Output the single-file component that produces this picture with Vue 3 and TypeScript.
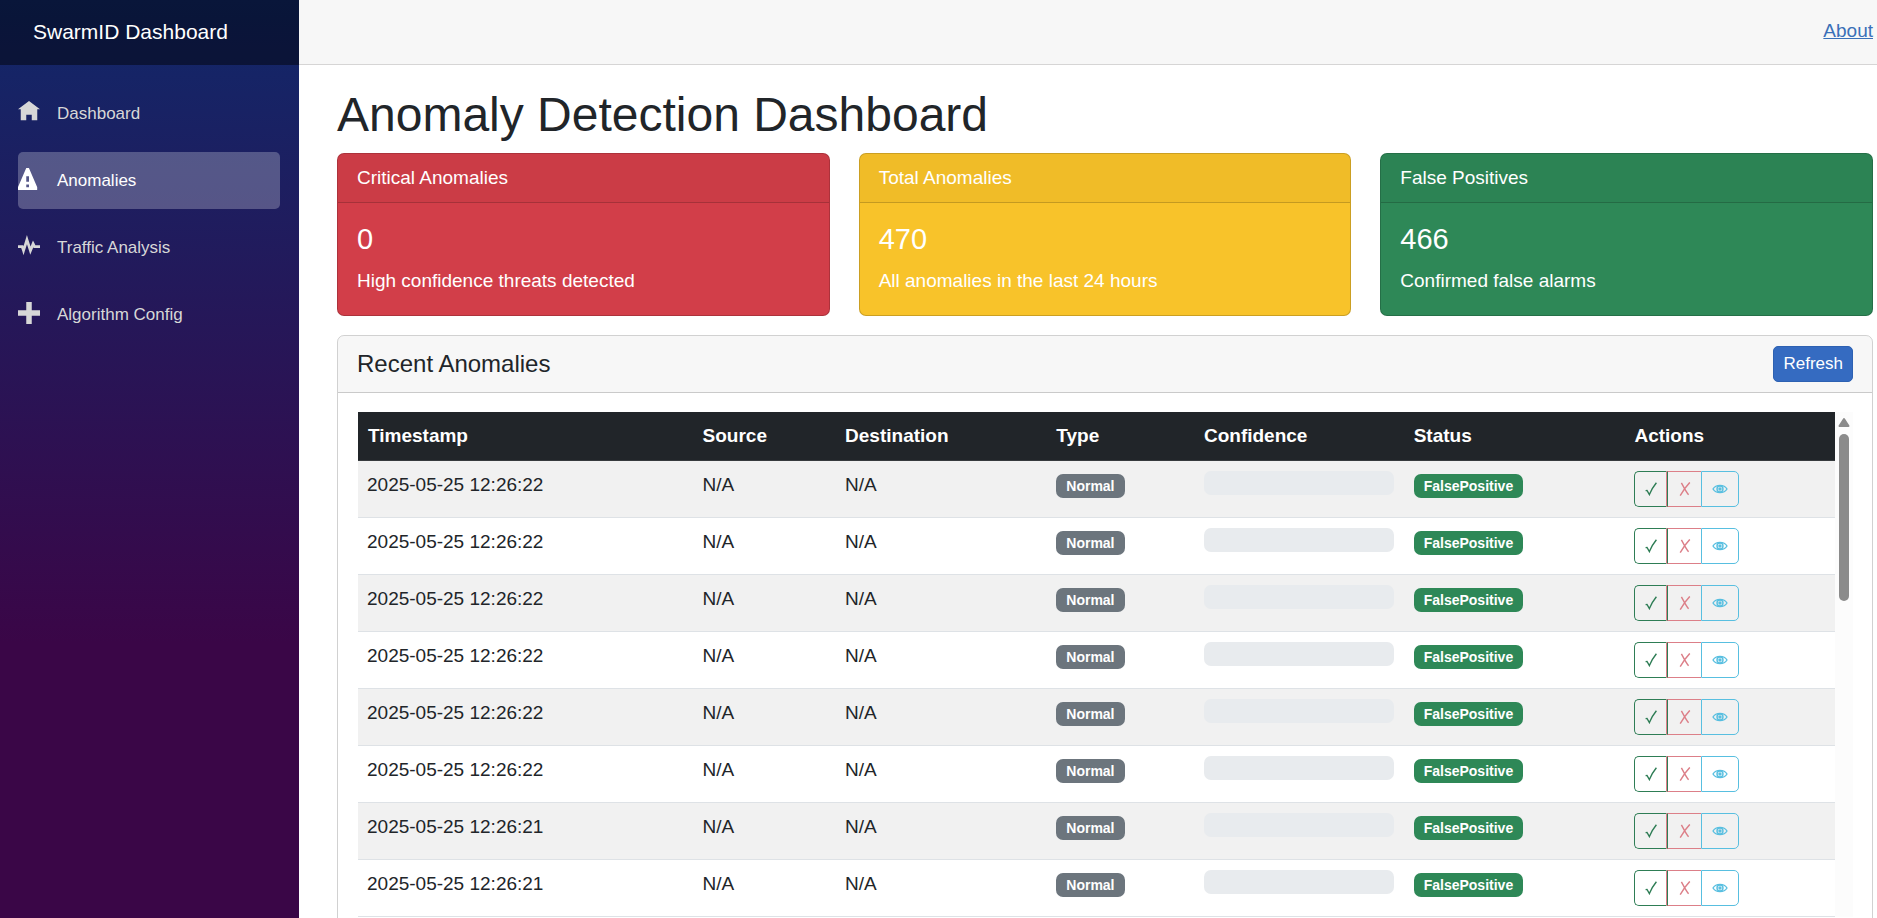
<script setup lang="ts">
interface NavItem { label: string; icon: string; active?: boolean }
interface Summary { title: string; value: number; note: string; tone: string }
interface Anomaly { id: number; time: string; source: string; destination: string; type: string; confidence: number; status: string }

const navItems: NavItem[] = [
  { label: 'Dashboard', icon: 'M4 0l-4 3h1v4h2v-2h2v2h2v-4.03l1 .03-4-3z' },
  { label: 'Anomalies', active: true, icon: 'M3.09 0c-.06 0-.1.04-.13.09l-2.94 6.81c-.02.05-.03.13-.03.19v.81c0 .05.04.09.09.09h6.81c.05 0 .09-.04.09-.09v-.81c0-.05-.01-.14-.03-.19l-2.94-6.81c-.02-.05-.07-.09-.13-.09h-.81zm-.09 3h1v2h-1v-2zm0 3h1v1h-1v-1z' },
  { label: 'Traffic Analysis', icon: 'M3.25 0l-.47 1.53-.78 2.56-.03-.06-.09-.34h-1.88v1h1.16l.38 1.16.47 1.47.47-1.5.78-2.5.78 2.5.41 1.34.53-1.28.59-1.47.13.28h2.31v-1h-1.69l-.38-.75-.5-.97-.41 1.03-.47 1.19-.84-2.66-.47-1.53z' },
  { label: 'Algorithm Config', icon: 'M3 0v3h-3v2h3v3h2v-3h3v-2h-3v-3h-2z' },
]

const summaries: Summary[] = [
  { title: 'Critical Anomalies', value: 0, note: 'High confidence threats detected', tone: 'danger' },
  { title: 'Total Anomalies', value: 470, note: 'All anomalies in the last 24 hours', tone: 'warning' },
  { title: 'False Positives', value: 466, note: 'Confirmed false alarms', tone: 'success' },
]

const columns = ['Timestamp', 'Source', 'Destination', 'Type', 'Confidence', 'Status', 'Actions']

const anomalies: Anomaly[] = Array.from({ length: 8 }, (_, i) => ({
  id: i + 1,
  time: i < 6 ? '2025-05-25 12:26:22' : '2025-05-25 12:26:21',
  source: 'N/A',
  destination: 'N/A',
  type: 'Normal',
  confidence: 0,
  status: 'FalsePositive',
}))
</script>

<template>
  <div class="page">
    <aside class="sidebar">
      <div class="brand-row"><a class="brand" href="#">SwarmID Dashboard</a></div>
      <nav class="nav">
        <a v-for="item in navItems" :key="item.label" href="#" class="nav-link" :class="{ active: item.active }">
          <span class="nav-icon"><svg viewBox="0 0 8 8" aria-hidden="true"><path :d="item.icon" /></svg></span>
          <span>{{ item.label }}</span>
        </a>
      </nav>
    </aside>

    <main class="main">
      <header class="top-row"><a href="#">About</a></header>
      <article class="content">
        <h1>Anomaly Detection Dashboard</h1>

        <section class="summaries">
          <div v-for="card in summaries" :key="card.title" class="card" :class="card.tone">
            <div class="card-header">{{ card.title }}</div>
            <div class="card-body">
              <h4>{{ card.value }}</h4>
              <p>{{ card.note }}</p>
            </div>
          </div>
        </section>

        <section class="card recent">
          <div class="card-header recent-header">
            <h5>Recent Anomalies</h5>
            <button type="button" class="refresh">Refresh</button>
          </div>
          <div class="card-body table-area">
            <table>
              <colgroup>
                <col v-for="name in columns" :key="name" :class="'col-' + name.toLowerCase()" />
              </colgroup>
              <thead>
                <tr><th v-for="name in columns" :key="name" scope="col">{{ name }}</th></tr>
              </thead>
              <tbody>
                <tr v-for="row in anomalies" :key="row.id">
                  <td>{{ row.time }}</td>
                  <td>{{ row.source }}</td>
                  <td>{{ row.destination }}</td>
                  <td><span class="badge">{{ row.type }}</span></td>
                  <td>
                    <div class="progress" role="progressbar" aria-label="Confidence" :aria-valuenow="row.confidence">
                      <div class="progress-bar" :style="{ width: row.confidence + '%' }"></div>
                    </div>
                  </td>
                  <td><span class="badge confirmed">{{ row.status }}</span></td>
                  <td>
                    <div class="actions">
                      <button type="button" class="action confirm" aria-label="Confirm">
                        <svg viewBox="0 0 12 14" aria-hidden="true"><path d="M.6 8.6 2 8.4 4.4 12.6C6.2 8.2 8.4 4.4 11.4.8" /></svg>
                      </button>
                      <button type="button" class="action reject" aria-label="Mark as false positive">
                        <svg viewBox="0 0 12 14" aria-hidden="true"><path d="M2.4.8C4 3.8 7 9.8 9.6 12.8M10.8.4C7.4 4 4 8.6 1.2 13.6" /></svg>
                      </button>
                      <button type="button" class="action view" aria-label="View details">
                        <svg viewBox="0 0 16 10" aria-hidden="true">
                          <path d="M1 5C4 .2 12 .2 15 5C12 9.8 4 9.8 1 5Z" />
                          <circle cx="8" cy="5" r="3" /><circle class="pupil" cx="8" cy="5" r="1" />
                        </svg>
                      </button>
                    </div>
                  </td>
                </tr>
              </tbody>
            </table>
            <div class="scrollbar" aria-hidden="true">
              <svg viewBox="0 0 12 10"><path d="M6 1.5 10.5 8.5H1.5Z" /></svg>
              <div class="thumb"></div>
            </div>
          </div>
        </section>
      </article>
    </main>
  </div>
</template>

<style>
body { margin: 0; }
</style>

<style scoped>
* { box-sizing: border-box; }
.page { display: flex; height: 100vh; overflow: hidden; background: #fff; color: #212529; font: 19px/29px "Liberation Sans", Arial, sans-serif; }
h1, h4, h5, p { margin: 0; font-weight: 400; }

.sidebar { flex: 0 0 299px; background: linear-gradient(180deg, #11286a 0%, #3a0647 70%); }
.brand-row { display: flex; align-items: center; height: 65px; padding: 0 0 2px 33px; background: rgba(0, 0, 0, .45); }
.brand { color: #fff; font-size: 21px; text-decoration: none; }
.nav { display: flex; flex-direction: column; gap: 10px; padding: 20px 19px 0 18px; }
.nav-link { display: flex; align-items: center; height: 57px; border-radius: 5px; color: #d7d7d7; font-size: 17px; text-decoration: none; }
.nav-link.active { background: rgba(255, 255, 255, .25); color: #fff; }
.nav-icon { display: flex; width: 39px; padding-bottom: 3px; }
.nav-icon svg { width: 22px; height: 22px; fill: currentColor; }

.main { flex: 1; min-width: 0; }
.top-row { display: flex; align-items: center; justify-content: flex-end; height: 65px; padding: 0 4px 4px 38px; background: #f7f7f7; border-bottom: 1px solid #d6d5d5; }
.top-row a { color: #3a70b8; }
.content { padding: 21px 4px 0 38px; }
h1 { margin-bottom: 9px; font-size: 48px; line-height: 58px; }

.summaries { display: grid; grid-template-columns: repeat(3, 1fr); gap: 29px; margin-bottom: 19px; color: #fff; }
.card { border: 1px solid rgba(0, 0, 0, .18); border-radius: 7px; overflow: hidden; }
.card-header { padding: 9px 19px 10px; background: rgba(0, 0, 0, .03); border-bottom: 1px solid rgba(0, 0, 0, .18); }
.card-body { padding: 19px 19px 20px; }
.danger { background-color: #d23e49; }
.warning { background-color: #f8c32a; }
.success { background-color: #2e8857; }
h4 { margin-bottom: 9px; font-size: 29px; line-height: 35px; }
h5 { font-size: 24px; line-height: 36px; }

.recent-header { display: flex; align-items: center; justify-content: space-between; padding: 10px 19px; }
.refresh { height: 36px; padding: 0 9px; border: 1px solid #2d61b2; border-radius: 5px; background: #356bc1; color: #fff; font: 17px/24px "Liberation Sans", Arial, sans-serif; }

.table-area { display: flex; align-items: stretch; padding-left: 20px; }
table { flex: 1; min-width: 0; width: 100%; table-layout: fixed; border-collapse: separate; border-spacing: 0; }
.col-timestamp { width: 22.65%; }
.col-source { width: 9.65%; }
.col-destination { width: 14.3%; }
.col-type { width: 10%; }
.col-confidence { width: 14.2%; }
.col-status { width: 14.95%; }
.col-actions { width: 14.25%; }
th { padding: 9px 10px 10px; background: #212529; border-bottom: 1px solid #373b3e; color: #fff; text-align: left; }
td { height: 57px; padding: 10px; border-bottom: 1px solid #dee2e6; vertical-align: top; line-height: 28px; }
td:first-child { padding-left: 9px; }
tbody tr:nth-child(odd) { background: #f1f1f1; }
.badge { display: inline-block; padding: 5px 10px; border-radius: 7px; background: #6c757d; color: #fff; font-size: 14px; font-weight: 700; line-height: 14px; }
.badge.confirmed { background: #2e8857; }
.progress { height: 24px; border-radius: 7px; background: #e8ebee; overflow: hidden; }
.progress-bar { height: 100%; background: #356bc1; }
.actions { display: flex; }
.action { display: flex; align-items: center; justify-content: center; width: 34px; height: 36px; padding: 0; border: 1px solid currentColor; background: transparent; }
.action svg { width: 12px; height: 14px; fill: none; stroke: currentColor; stroke-width: 1.4; }
.confirm { width: 33px; border-right-color: #dc7f88; border-radius: 5px 0 0 5px; color: #2e7d55; }
.reject { border-left-color: #2e7d55; border-right: 0; color: #dc7f88; }
.view { width: 38px; border-radius: 0 5px 5px 0; color: #58bfe0; }
.action.view svg { width: 16px; height: 10px; }
.action .pupil { fill: currentColor; }

.scrollbar { display: flex; flex: 0 0 18px; flex-direction: column; align-items: center; gap: 6px; padding-top: 5px; background: #fcfcfc; }
.scrollbar svg { width: 12px; height: 11px; fill: #8b8b8b; stroke: #8b8b8b; stroke-width: 2; stroke-linejoin: round; }
.thumb { width: 10px; height: 167px; border-radius: 5px; background: #8b8b8b; }
</style>
